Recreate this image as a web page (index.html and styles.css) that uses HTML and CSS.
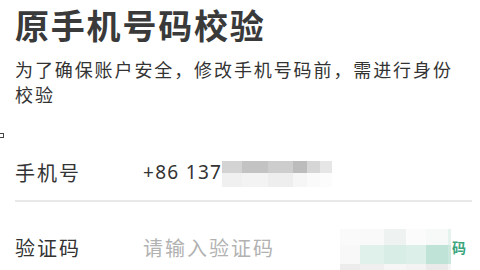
FILE: index.html
```html
<!DOCTYPE html>
<html lang="zh-CN">
<head>
<meta charset="utf-8">
<link rel="stylesheet" href="styles.css">
</head>
<body>
<div class="page">
  <h1 class="title">原手机号码校验</h1>
  <p class="desc">为了确保账户安全，修改手机号码前，需进行身份校验</p>
  <span class="mark"></span>
  <div class="row row-phone">
    <span class="label">手机号</span>
    <span class="value">+86 137</span>
    <span class="blur-num">
      <span class="px p1"></span><span class="px p2"></span><span class="px p3"></span><span class="px p4"></span><span class="px p5"></span><span class="px p6"></span>
      <span class="px q1"></span><span class="px q2"></span><span class="px q3"></span><span class="px q4"></span><span class="px q5"></span><span class="px q6"></span>
    </span>
  </div>
  <div class="divider"></div>
  <div class="row row-code">
    <span class="label">验证码</span>
    <span class="placeholder">请输入验证码</span>
    <span class="code-btn">
      <span class="blur-btn">
        <span class="g a1"></span><span class="g a2"></span><span class="g a3"></span><span class="g a4"></span><span class="g a5"></span><span class="g a6"></span>
        <span class="g b1"></span><span class="g b2"></span><span class="g b3"></span><span class="g b4"></span><span class="g b5"></span><span class="g b6"></span>
        <span class="g c1"></span><span class="g c2"></span><span class="g c3"></span><span class="g c4"></span><span class="g c5"></span><span class="g c6"></span>
      </span>
      <span class="btn-text">码</span>
    </span>
  </div>
</div>
</body>
</html>
```
FILE: styles.css
```css
html, body {
  margin: 0;
  padding: 0;
  background: #ffffff;
  overflow: hidden;
}
body {
  width: 480px;
  height: 270px;
  font-family: "Noto Sans CJK SC", "Noto Sans", sans-serif;
  color: #333333;
}
.page {
  position: relative;
  padding: 0 8px 0 15px;
}
.title {
  margin: 0;
  padding-top: 5px;
  font-size: 34px;
  line-height: 40px;
  font-weight: 700;
  letter-spacing: 1.8px;
  color: #3a3a3a;
}
.desc {
  margin: 12px 0 0;
  font-size: 18px;
  line-height: 25px;
  letter-spacing: 1.9px;
  color: #333333;
}
.mark {
  position: absolute;
  left: 0;
  top: 133px;
  width: 3px;
  height: 3px;
  border: 1px solid #444;
  border-left: none;
}
.row {
  display: flex;
  align-items: center;
}
.row-phone {
  margin-top: 45px;
  height: 40px;
}
.label {
  width: 128px;
  flex: none;
  font-size: 20px;
  letter-spacing: 2px;
  color: #333333;
}
.value {
  font-family: "Noto Sans", sans-serif;
  font-size: 19px;
  letter-spacing: 1.3px;
  color: #333333;
}
.blur-num {
  display: grid;
  grid-template-columns: 20px 26px 25px 14px 13px 12px;
  grid-template-rows: 12px 14px;
  margin-top: 4px;
}
.p1 { background: #d3d3d3; }
.p2 { background: #c3c3c3; }
.p3 { background: #cdcdcd; }
.p4 { background: #bcbcbc; }
.p5 { background: #d6d6d6; }
.p6 { background: #e6e6e6; }
.q1 { background: #f0f0f0; }
.q2 { background: #f3f3f3; }
.q3 { background: #eeeeee; }
.q4 { background: #f6f6f6; }
.q5 { background: #fafafa; }
.q6 { background: #fcfcfc; }
.divider {
  margin-top: 8px;
  width: 457px;
  height: 2px;
  background: #e8e8e8;
}
.row-code {
  margin-top: 23px;
  height: 44px;
}
.placeholder {
  font-size: 20px;
  letter-spacing: 2px;
  color: #b2b2b2;
}
.code-btn {
  margin-left: auto;
  display: flex;
  align-items: center;
  margin-right: 6px;
}
.blur-btn {
  display: grid;
  grid-template-columns: 20px 24px 22px 20px 22px 3px;
  grid-template-rows: 16px 19px 12px;
  margin-top: 10px;
}
.a1 { background: #fafafa; }
.a2 { background: #f8f9f8; }
.a3 { background: #eef3f1; }
.a4 { background: #fafbfa; }
.a5 { background: #f7f9f8; }
.a6 { background: #e6f2ee; }
.b1 { background: #f7f8f7; }
.b2 { background: #e0f0ea; }
.b3 { background: #d8ede6; }
.b4 { background: #dcefe8; }
.b5 { background: #bfe3d7; }
.b6 { background: #cbe8de; }
.c1 { background: #ececec; }
.c2 { background: #efefef; }
.c3 { background: #f6f6f6; }
.c4 { background: #f3f3f3; }
.c5 { background: #eaeaea; }
.c6 { background: #f5f5f5; }
.btn-text {
  font-size: 14px;
  font-weight: 700;
  color: #3aa57d;
  margin-left: 1px;
}
```
